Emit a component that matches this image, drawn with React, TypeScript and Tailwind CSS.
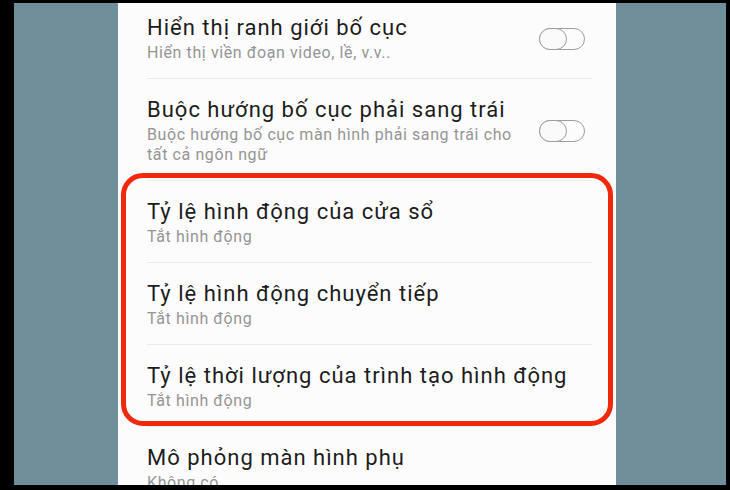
import React from 'react'

type Item = {
  title: string
  sub: string[]
  toggle?: boolean
  last?: boolean
}

const items: Item[] = [
  { title: 'Hiển thị ranh giới bố cục', sub: ['Hiển thị viền đoạn video, lề, v.v..'], toggle: true },
  {
    title: 'Buộc hướng bố cục phải sang trái',
    sub: ['Buộc hướng bố cục màn hình phải sang trái cho', 'tất cả ngôn ngữ'],
    toggle: true,
  },
  { title: 'Tỷ lệ hình động của cửa sổ', sub: ['Tắt hình động'] },
  { title: 'Tỷ lệ hình động chuyển tiếp', sub: ['Tắt hình động'] },
  { title: 'Tỷ lệ thời lượng của trình tạo hình động', sub: ['Tắt hình động'] },
  { title: 'Mô phỏng màn hình phụ', sub: ['Không có'], last: true },
]

function Toggle() {
  return (
    <div className="relative w-[46px] h-[22px] rounded-full border-[1.5px] border-[#9e9e9e] shrink-0">
      <div className="absolute left-[-1.5px] top-[-1.5px] w-[28px] h-[22px] rounded-full border-[1.5px] border-[#9e9e9e] bg-[#fafafa]" />
    </div>
  )
}

function Row({ item }: { item: Item }) {
  return (
    <div className="pl-[29px] pr-[24px]">
      <div className={`flex items-center justify-between pt-[18px] pb-[15px] ${item.last ? '' : 'border-b border-[#ebebeb]'}`}>
        <div>
          <p className="text-[22px] leading-[26px] tracking-[1px] text-[#1c1c1c]">{item.title}</p>
          <div className="mt-[2px] text-[16px] leading-[20px] tracking-[0.6px] text-[#959595]">
            {item.sub.map((s) => (
              <p key={s} className="whitespace-nowrap">{s}</p>
            ))}
          </div>
        </div>
        {item.toggle && (
          <div className="mr-[7px]">
            <Toggle />
          </div>
        )}
      </div>
    </div>
  )
}

export default function App() {
  return (
    <div className="w-[730px] h-[490px] bg-black pt-[3px] pl-[14px] pr-[4px] pb-[5px] font-['Roboto','Noto_Sans',sans-serif]">
      <div className="flex h-full bg-[#718e9b]">
        <div className="w-[104px]" />
        <div className="relative w-[498px] h-full bg-[#fcfcfc] overflow-hidden">
          <div className="-mt-[6px]">
            {items.map((it) => (
              <Row key={it.title} item={it} />
            ))}
          </div>
          <div className="absolute left-[3px] top-[170px] w-[492px] h-[253px] rounded-[22px] border-[5px] border-[#f0290c]" />
        </div>
      </div>
    </div>
  )
}
